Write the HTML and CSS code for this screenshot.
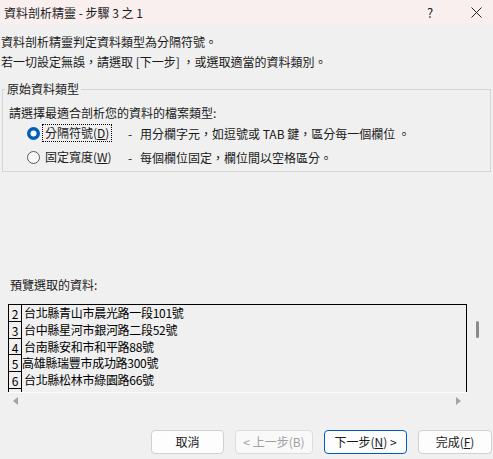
FILE: index.html
```html
<!DOCTYPE html>
<html lang="zh-Hant">
<head>
<meta charset="utf-8">
<title>資料剖析精靈</title>
<link rel="stylesheet" href="styles.css">
</head>
<body>
<div class="window">
  <div class="titlebar">
    <span class="title">資料剖析精靈 - 步驟 3 之 1</span>
    <span class="help">?</span>
    <span class="close"><svg width="11" height="11" viewBox="0 0 11 11"><path d="M0.5 0.5L10.5 10.5M10.5 0.5L0.5 10.5" stroke="#222" stroke-width="1" fill="none"/></svg></span>
  </div>

  <div class="intro">
    <p>資料剖析精靈判定資料類型為分隔符號。</p>
    <p>若一切設定無誤，請選取 [下一步] ，或選取適當的資料類別。</p>
  </div>

  <fieldset class="group">
    <legend>原始資料類型</legend>
    <p class="prompt">請選擇最適合剖析您的資料的檔案類型:</p>
    <div class="opt">
      <span class="radio"><svg width="13" height="13" viewBox="0 0 13 13"><circle cx="6.5" cy="6.5" r="6.5" fill="#005fb8"/><circle cx="6.5" cy="6.5" r="3" fill="#fff"/></svg></span>
      <span class="optcell"><span class="optlabel focus">分隔符號(<u>D</u>)</span></span>
      <span class="dash">-</span>
      <span class="desc">用分欄字元，如逗號或 TAB 鍵，區分每一個欄位 。</span>
    </div>
    <div class="opt">
      <span class="radio"><svg width="13" height="13" viewBox="0 0 13 13"><circle cx="6.5" cy="6.5" r="6" fill="#f7f7f7" stroke="#5a5a5a" stroke-width="1"/></svg></span>
      <span class="optcell"><span class="optlabel">固定寬度(<u>W</u>)</span></span>
      <span class="dash">-</span>
      <span class="desc">每個欄位固定，欄位間以空格區分。</span>
    </div>
  </fieldset>

  <p class="preview-label">預覽選取的資料:</p>

  <div class="preview">
    <div class="viewport">
      <div class="row"><span class="num">2</span><span class="cell">台北縣青山市晨光路一段101號</span></div>
      <div class="row"><span class="num">3</span><span class="cell">台中縣星河市銀河路二段52號</span></div>
      <div class="row"><span class="num">4</span><span class="cell">台南縣安和市和平路88號</span></div>
      <div class="row"><span class="num">5</span><span class="cell shift">高雄縣瑞豐市成功路300號</span></div>
      <div class="row"><span class="num">6</span><span class="cell">台北縣松林市綠園路66號</span></div>
      <div class="row"><span class="num"></span><span class="cell"></span></div>
    </div>
    <div class="vscroll"><div class="thumb"></div></div>
    <div class="hscroll">
      <svg width="5" height="8" viewBox="0 0 5 8"><path d="M5 0V8L0 4Z" fill="#a3a3a3"/></svg>
      <svg width="5" height="8" viewBox="0 0 5 8"><path d="M0 0V8L5 4Z" fill="#a3a3a3"/></svg>
    </div>
  </div>

  <div class="footer">
    <button class="btn w-cancel">取消</button>
    <button class="btn w-back disabled">&lt; 上一步(B)</button>
    <button class="btn w-next primary">下一步(<u>N</u>) &gt;</button>
    <button class="btn w-finish">完成(<u>F</u>)</button>
  </div>
</div>
</body>
</html>
```

FILE: styles.css
```css
* { box-sizing: border-box; }

html, body {
  margin: 0;
  padding: 0;
}

body {
  width: 493px;
  height: 459px;
  overflow: hidden;
  background: #f0f0f0;
  color: #1a1a1a;
  font-family: "Noto Sans CJK TC", "Noto Sans", sans-serif;
  font-size: 12px;
}

.window {
  width: 493px;
  height: 459px;
}

.titlebar {
  height: 25px;
  background: #f9efef;
  display: flex;
  align-items: center;
  padding-left: 4px;
  padding-right: 7px;
  line-height: 16px;
}

.title {
  font-size: 12px;
  color: #1a1a1a;
}

.help {
  margin-left: auto;
  width: 20px;
  text-align: center;
  font-size: 13px;
  margin-right: 26px;
}

.close {
  width: 20px;
  display: flex;
  justify-content: center;
  align-items: center;
}

.intro {
  margin-top: 7px;
  padding-left: 1px;
}

.intro p {
  margin: 0;
  line-height: 20px;
}

.group {
  margin: 9px 2px 0 2px;
  padding: 7px 0 2px 0;
  border: 1px solid #d6d6d6;
  min-width: 0;
}

.group legend {
  margin-left: 2px;
  padding: 0 2px;
  line-height: 16px;
  font-size: 12px;
}

.prompt {
  margin: 0;
  padding-left: 6px;
  line-height: 17px;
}

.opt {
  display: grid;
  grid-template-columns: 13px 84px 10px 1fr;
  column-gap: 2px;
  align-items: center;
  height: 24px;
  padding-left: 24px;
}

.radio {
  display: flex;
  width: 13px;
  height: 13px;
}

.optcell {
  display: flex;
  align-items: center;
}

.optlabel {
  display: inline-block;
  line-height: 16px;
  padding: 0 2px;
  border: 1px solid transparent;
  white-space: nowrap;
}

.optlabel.focus {
  border: 1px dotted #000;
}

.dash {
  white-space: nowrap;
}

.desc {
  white-space: nowrap;
}

.preview-label {
  margin: 105px 0 0 0;
  padding-left: 10px;
  line-height: 16px;
}

.preview {
  margin: 11px 0 0 8px;
  display: grid;
  grid-template-columns: 459px 18px;
  grid-template-rows: 88px 17px;
}

.viewport {
  border: 1px solid #000;
  border-bottom: none;
  overflow: hidden;
  font-size: 12px;
  letter-spacing: -0.3px;
  color: #000;
}

.row {
  display: flex;
  height: 16.75px;
  line-height: 16px;
}

.num {
  width: 13px;
  flex: none;
  border-right: 1px solid #000;
  border-bottom: 1px solid #000;
  text-align: center;
  letter-spacing: 0;
  line-height: 17px;
}

.cell {
  padding-left: 2px;
  white-space: nowrap;
}

.cell.shift {
  padding-left: 0;
}

.vscroll {
  padding: 17px 0 0 9px;
}

.thumb {
  width: 3px;
  height: 17px;
  border-radius: 1.5px;
  background: #8a8a8a;
}

.hscroll {
  border-top: 1px solid #fbfbfb;
  display: flex;
  align-items: center;
  justify-content: space-between;
  padding: 0 6px 0 5px;
}

.footer {
  margin-top: 21px;
  display: flex;
  justify-content: flex-end;
  gap: 11px;
  padding-right: 1px;
}

.btn {
  height: 24px;
  border: 1px solid #d0d0d0;
  border-radius: 4px;
  background: #fdfdfd;
  color: #1a1a1a;
  font-family: "Noto Sans CJK TC", "Noto Sans", sans-serif;
  font-size: 12px;
  line-height: 20px;
  padding: 0;
  text-align: center;
  white-space: nowrap;
}

.w-cancel { width: 73px; }
.w-back { width: 78px; }
.w-next { width: 83px; }
.w-finish { width: 74px; }

.btn.primary {
  border-color: #005fb8;
}

.btn.disabled {
  color: #a0a0a0;
  border-color: #dcdcdc;
  background: #f9f9f9;
}
```
